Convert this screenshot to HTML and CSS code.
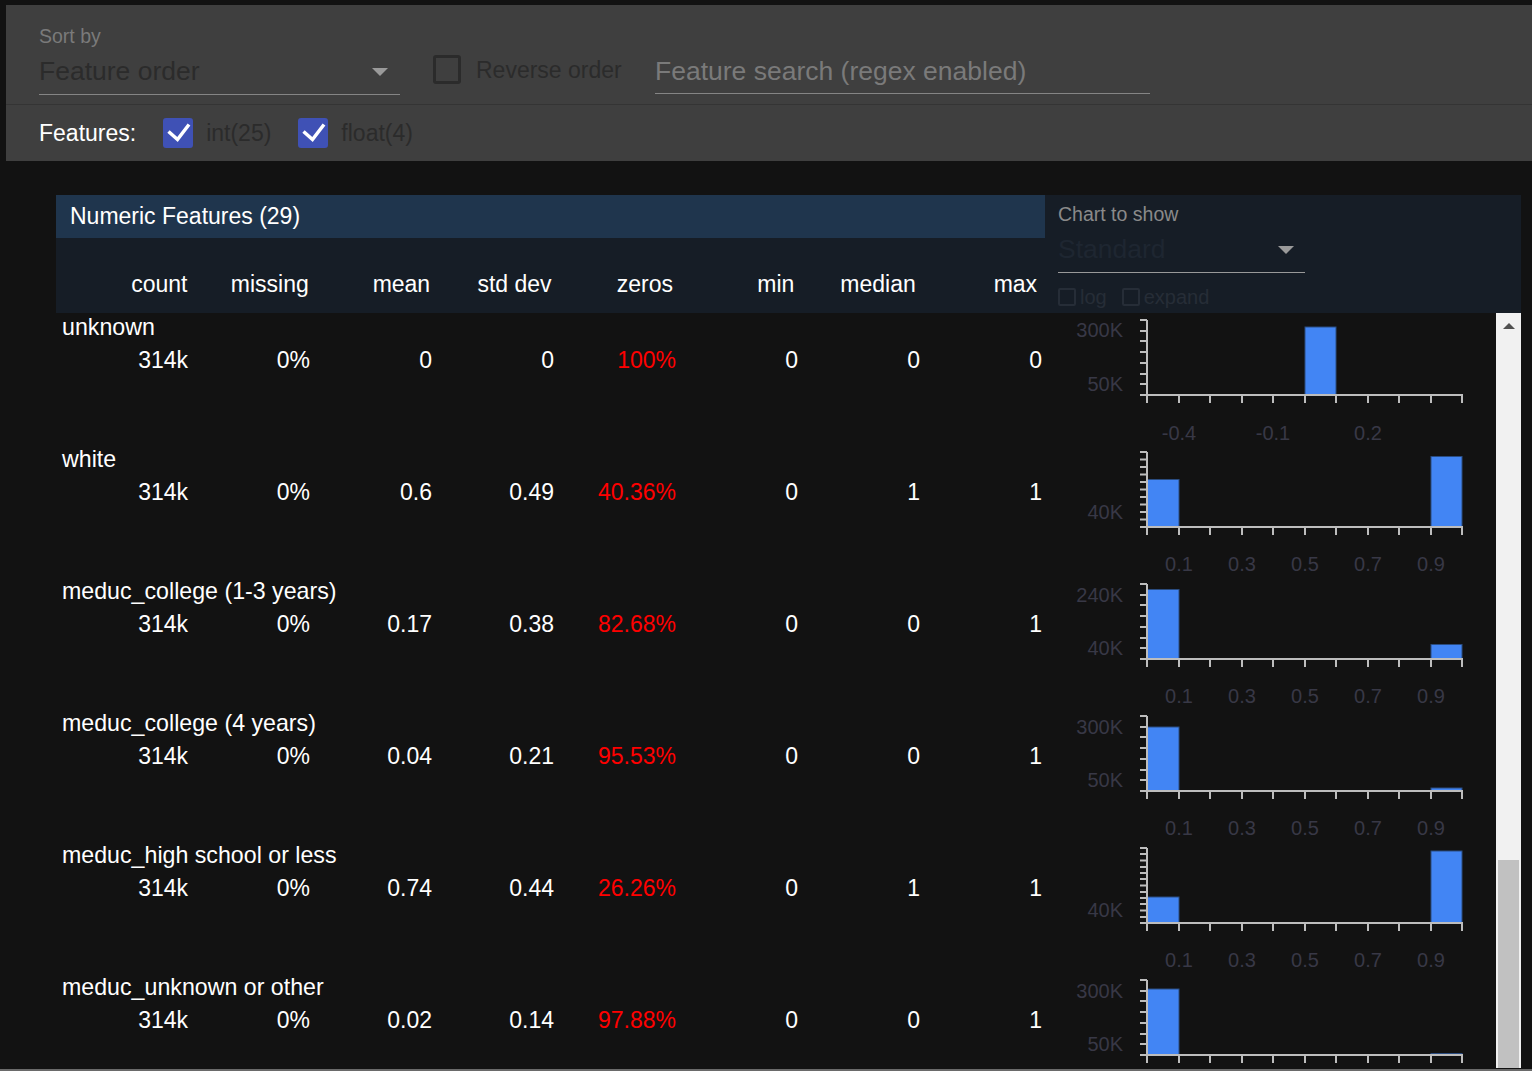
FILE: index.html
```html
<!DOCTYPE html>
<html>
<head>
<meta charset="utf-8">
<link rel="stylesheet" href="styles.css">
</head>
<body>
<div class="toolbar">
  <div class="toolbar-top">
    <div class="sort-field">
      <div class="field-label">Sort by</div>
      <div class="field-value"><span>Feature order</span><span class="tri"></span></div>
    </div>
    <div class="reverse">
      <span class="cb-empty"></span>
      <span class="reverse-label">Reverse order</span>
    </div>
    <div class="search">Feature search (regex enabled)</div>
  </div>
  <div class="toolbar-bottom">
    <span class="features-label">Features:</span>
    <span class="cb-checked"><svg width="30" height="30" viewBox="0 0 30 30"><path d="M5.5 13.5L14.5 21.5L26 6.5" fill="none" stroke="#fff" stroke-width="3.5"/></svg></span>
    <span class="type-label">int(25)</span>
    <span class="cb-checked"><svg width="30" height="30" viewBox="0 0 30 30"><path d="M5.5 13.5L14.5 21.5L26 6.5" fill="none" stroke="#fff" stroke-width="3.5"/></svg></span>
    <span class="type-label">float(4)</span>
  </div>
</div>

<div class="panel">
  <div class="panel-head">
    <div class="head-left">
      <div class="title-bar">Numeric Features (29)</div>
      <div class="col-heads">
        <div>count</div><div>missing</div><div>mean</div><div>std dev</div><div>zeros</div><div>min</div><div>median</div><div>max</div>
      </div>
    </div>
    <div class="chart-ctrl">
      <div class="ctrl-label">Chart to show</div>
      <div class="ctrl-value"><span>Standard</span><span class="tri"></span></div>
      <div class="ctrl-checks">
        <span class="cb-small"></span><span class="ctrl-opt">log</span>
        <span class="cb-small cb-gap"></span><span class="ctrl-opt">expand</span>
      </div>
    </div>
  </div>

  <div class="body-area">
    <div class="rows">

      <div class="row">
        <div class="row-left">
          <div class="fname">unknown</div>
          <div class="stats"><div>314k</div><div>0%</div><div>0</div><div>0</div><div class="warn">100%</div><div>0</div><div>0</div><div>0</div></div>
        </div>
        <svg class="chart" width="451" height="132" viewBox="0 0 451 132">
          <rect class="bar" x="260" y="14" width="31" height="68"/>
          <path class="axis" d="M102 7V82M95 7H102M95 18H102M95 28H102M95 39H102M95 50H102M95 61H102M95 71H102"/>
          <path class="axis" d="M95 82H418M102 82v8M134 82v8M165 82v8M197 82v8M228 82v8M260 82v8M291 82v8M323 82v8M354 82v8M386 82v8M417 82v8"/>
          <text class="ylab" x="78" y="17">300K</text>
          <text class="ylab" x="78" y="71">50K</text>
          <text class="xlab" x="134" y="120">-0.4</text>
          <text class="xlab" x="228" y="120">-0.1</text>
          <text class="xlab" x="323" y="120">0.2</text>
        </svg>
      </div>

      <div class="row">
        <div class="row-left">
          <div class="fname">white</div>
          <div class="stats"><div>314k</div><div>0%</div><div>0.6</div><div>0.49</div><div class="warn">40.36%</div><div>0</div><div>1</div><div>1</div></div>
        </div>
        <svg class="chart" width="451" height="132" viewBox="0 0 451 132">
          <rect class="bar" x="102" y="34.5" width="32" height="47.5"/>
          <rect class="bar" x="386" y="11.5" width="31" height="70.5"/>
          <path class="axis" d="M102 7V82M95 7H102M95 14.5H102M95 22H102M95 29.5H102M95 37H102M95 44.5H102M95 52H102M95 59.5H102M95 67H102M95 74.5H102"/>
          <path class="axis" d="M95 82H418M102 82v8M134 82v8M165 82v8M197 82v8M228 82v8M260 82v8M291 82v8M323 82v8M354 82v8M386 82v8M417 82v8"/>
          <text class="ylab" x="78" y="67">40K</text>
          <text class="xlab" x="134" y="119">0.1</text>
          <text class="xlab" x="197" y="119">0.3</text>
          <text class="xlab" x="260" y="119">0.5</text>
          <text class="xlab" x="323" y="119">0.7</text>
          <text class="xlab" x="386" y="119">0.9</text>
        </svg>
      </div>

      <div class="row">
        <div class="row-left">
          <div class="fname">meduc_college (1-3 years)</div>
          <div class="stats"><div>314k</div><div>0%</div><div>0.17</div><div>0.38</div><div class="warn">82.68%</div><div>0</div><div>0</div><div>1</div></div>
        </div>
        <svg class="chart" width="451" height="132" viewBox="0 0 451 132">
          <rect class="bar" x="102" y="12.5" width="32" height="69.5"/>
          <rect class="bar" x="386" y="67.5" width="31" height="14.5"/>
          <path class="axis" d="M102 7V82M95 7H102M95 18H102M95 28H102M95 39H102M95 50H102M95 61H102M95 71H102"/>
          <path class="axis" d="M95 82H418M102 82v8M134 82v8M165 82v8M197 82v8M228 82v8M260 82v8M291 82v8M323 82v8M354 82v8M386 82v8M417 82v8"/>
          <text class="ylab" x="78" y="18">240K</text>
          <text class="ylab" x="78" y="71">40K</text>
          <text class="xlab" x="134" y="119">0.1</text>
          <text class="xlab" x="197" y="119">0.3</text>
          <text class="xlab" x="260" y="119">0.5</text>
          <text class="xlab" x="323" y="119">0.7</text>
          <text class="xlab" x="386" y="119">0.9</text>
        </svg>
      </div>

      <div class="row">
        <div class="row-left">
          <div class="fname">meduc_college (4 years)</div>
          <div class="stats"><div>314k</div><div>0%</div><div>0.04</div><div>0.21</div><div class="warn">95.53%</div><div>0</div><div>0</div><div>1</div></div>
        </div>
        <svg class="chart" width="451" height="132" viewBox="0 0 451 132">
          <rect class="bar" x="102" y="18" width="32" height="64"/>
          <rect class="bar" x="386" y="79" width="31" height="3"/>
          <path class="axis" d="M102 7V82M95 7H102M95 18H102M95 28H102M95 39H102M95 50H102M95 61H102M95 71H102"/>
          <path class="axis" d="M95 82H418M102 82v8M134 82v8M165 82v8M197 82v8M228 82v8M260 82v8M291 82v8M323 82v8M354 82v8M386 82v8M417 82v8"/>
          <text class="ylab" x="78" y="18">300K</text>
          <text class="ylab" x="78" y="71">50K</text>
          <text class="xlab" x="134" y="119">0.1</text>
          <text class="xlab" x="197" y="119">0.3</text>
          <text class="xlab" x="260" y="119">0.5</text>
          <text class="xlab" x="323" y="119">0.7</text>
          <text class="xlab" x="386" y="119">0.9</text>
        </svg>
      </div>

      <div class="row">
        <div class="row-left">
          <div class="fname">meduc_high school or less</div>
          <div class="stats"><div>314k</div><div>0%</div><div>0.74</div><div>0.44</div><div class="warn">26.26%</div><div>0</div><div>1</div><div>1</div></div>
        </div>
        <svg class="chart" width="451" height="132" viewBox="0 0 451 132">
          <rect class="bar" x="102" y="56" width="32" height="26"/>
          <rect class="bar" x="386" y="10" width="31" height="72"/>
          <path class="axis" d="M102 7V82M95 7H102M95 13H102M95 19.5H102M95 26H102M95 32H102M95 38H102M95 44.5H102M95 51H102M95 57H102M95 63H102M95 69.5H102M95 76H102"/>
          <path class="axis" d="M95 82H418M102 82v8M134 82v8M165 82v8M197 82v8M228 82v8M260 82v8M291 82v8M323 82v8M354 82v8M386 82v8M417 82v8"/>
          <text class="ylab" x="78" y="69">40K</text>
          <text class="xlab" x="134" y="119">0.1</text>
          <text class="xlab" x="197" y="119">0.3</text>
          <text class="xlab" x="260" y="119">0.5</text>
          <text class="xlab" x="323" y="119">0.7</text>
          <text class="xlab" x="386" y="119">0.9</text>
        </svg>
      </div>

      <div class="row">
        <div class="row-left">
          <div class="fname">meduc_unknown or other</div>
          <div class="stats"><div>314k</div><div>0%</div><div>0.02</div><div>0.14</div><div class="warn">97.88%</div><div>0</div><div>0</div><div>1</div></div>
        </div>
        <svg class="chart" width="451" height="132" viewBox="0 0 451 132">
          <rect class="bar" x="102" y="16" width="32" height="66"/>
          <rect class="bar" x="386" y="80.5" width="31" height="1.5"/>
          <path class="axis" d="M102 7V82M95 7H102M95 18H102M95 28H102M95 39H102M95 50H102M95 61H102M95 71H102"/>
          <path class="axis" d="M95 82H418M102 82v8M134 82v8M165 82v8M197 82v8M228 82v8M260 82v8M291 82v8M323 82v8M354 82v8M386 82v8M417 82v8"/>
          <text class="ylab" x="78" y="18">300K</text>
          <text class="ylab" x="78" y="71">50K</text>
        </svg>
      </div>

    </div>
    <div class="scrollbar">
      <span class="sb-arrow"></span>
      <span class="sb-thumb"></span>
    </div>
  </div>
</div>
<div class="bottom-line"></div>
</body>
</html>
```

FILE: styles.css
```css
* { box-sizing: border-box; }
html, body { margin: 0; padding: 0; }
body {
  background: #121212;
  font-family: "Liberation Sans", Arial, sans-serif;
  color: #fff;
  height: 1071px;
  overflow: hidden;
  padding-top: 5px;
}

/* toolbar */
.toolbar { margin-left: 6px; background: #3f3f3f; }
.toolbar-top {
  height: 100px;
  border-bottom: 1px solid #343434;
  display: flex;
  align-items: flex-start;
  padding-left: 33px;
}
.sort-field {
  width: 361px;
  padding-top: 20px;
  padding-bottom: 6px;
  border-bottom: 1px solid #858585;
}
.field-label { font-size: 19.5px; line-height: 22px; color: #7a7a7a; }
.field-value {
  margin-top: 7px;
  font-size: 26.5px;
  line-height: 34px;
  color: #2b2b2b;
  display: flex;
  align-items: center;
  justify-content: space-between;
}
.tri {
  width: 0; height: 0;
  border-left: 8px solid transparent;
  border-right: 8px solid transparent;
  border-top: 8px solid #9a9a9a;
  margin-right: 12px;
  margin-top: 2px;
}
.reverse {
  margin-left: 33px;
  width: 222px;
  margin-top: 50px;
  display: flex;
  align-items: center;
}
.cb-empty {
  width: 28px; height: 29px;
  border: 3px solid #2b2b2b;
  border-radius: 3px;
}
.reverse-label { margin-left: 15px; font-size: 23px; line-height: 28px; color: #2b2b2b; }
.search {
  width: 495px;
  padding-top: 49px;
  padding-bottom: 5px;
  font-size: 26.5px;
  line-height: 34px;
  color: #7a7a7a;
  border-bottom: 1px solid #858585;
}
.toolbar-bottom {
  height: 56px;
  display: flex;
  align-items: center;
  padding-left: 33px;
  font-size: 23px;
}
.features-label { color: #fff; }
.cb-checked {
  margin-left: 27px;
  width: 30px; height: 30px;
  background: #3f51b5;
  border-radius: 3px;
  display: block;
}
.cb-checked svg { display: block; }
.type-label { margin-left: 13px; color: #2b2b2b; }

/* panel */
.panel { margin-top: 34px; margin-left: 56px; width: 1465px; }
.panel-head { display: flex; height: 118px; }
.head-left { width: 989px; }
.title-bar {
  height: 43px;
  background: #1f354d;
  padding-left: 14px;
  font-size: 23px;
  line-height: 43px;
}
.col-heads {
  height: 75px;
  background: #161d26;
  padding-top: 32px;
  padding-left: 14px;
  display: grid;
  grid-template-columns: repeat(8, 121.4px);
  font-size: 23px;
  line-height: 28px;
}
.col-heads div { text-align: right; padding-right: 4px; }
.chart-ctrl {
  flex: 1;
  background: #161d26;
  padding-left: 13px;
  padding-top: 8px;
}
.ctrl-label { font-size: 19.5px; line-height: 22px; color: #8a8a8a; }
.ctrl-value {
  width: 247px;
  margin-top: 7px;
  padding-bottom: 6px;
  border-bottom: 1px solid #999;
  font-size: 26.5px;
  line-height: 34px;
  color: #1e2631;
  display: flex;
  align-items: center;
  justify-content: space-between;
}
.ctrl-value .tri { margin-right: 11px; }
.ctrl-checks {
  margin-top: 15px;
  display: flex;
  align-items: center;
  height: 18px;
  font-size: 20px;
  color: #262d37;
}
.cb-small {
  width: 18px; height: 18px;
  border: 2px solid #262d37;
  border-radius: 2px;
}
.cb-gap { margin-left: 15px; }
.ctrl-opt { margin-left: 4px; }

.body-area { display: flex; height: 755px; }
.rows { width: 1440px; overflow: hidden; }
.row { display: flex; height: 132px; }
.row-left { width: 989px; }
.fname { padding-left: 6px; font-size: 23.2px; line-height: 28px; white-space: nowrap; }
.stats {
  margin-top: 5px;
  margin-left: 14px;
  display: grid;
  grid-template-columns: repeat(8, 122px);
  font-size: 23px;
  line-height: 28px;
}
.stats div { text-align: right; padding-right: 4px; }
.stats .warn { color: #ff0000; }
.chart { display: block; flex: none; }
.bar { fill: #4285f4; stroke: #2a4c80; stroke-width: 1; }
.axis { fill: none; stroke: #bdbdbd; stroke-width: 2; }
.ylab, .xlab {
  font-family: "Liberation Sans", Arial, sans-serif;
  font-size: 20px;
  fill: #383846;
  dominant-baseline: central;
}
.ylab { text-anchor: end; }
.xlab { text-anchor: middle; }

.scrollbar {
  width: 25px;
  background: #f1f1f1;
  display: flex;
  flex-direction: column;
  align-items: center;
}
.sb-arrow {
  margin-top: 10px;
  width: 0; height: 0;
  border-left: 6px solid transparent;
  border-right: 6px solid transparent;
  border-bottom: 6px solid #505050;
}
.sb-thumb {
  margin-top: auto;
  width: 21px;
  height: 208px;
  background: #c1c1c1;
}
.bottom-line { margin-top: 1px; height: 2px; background: #6a6a6a; }
```
